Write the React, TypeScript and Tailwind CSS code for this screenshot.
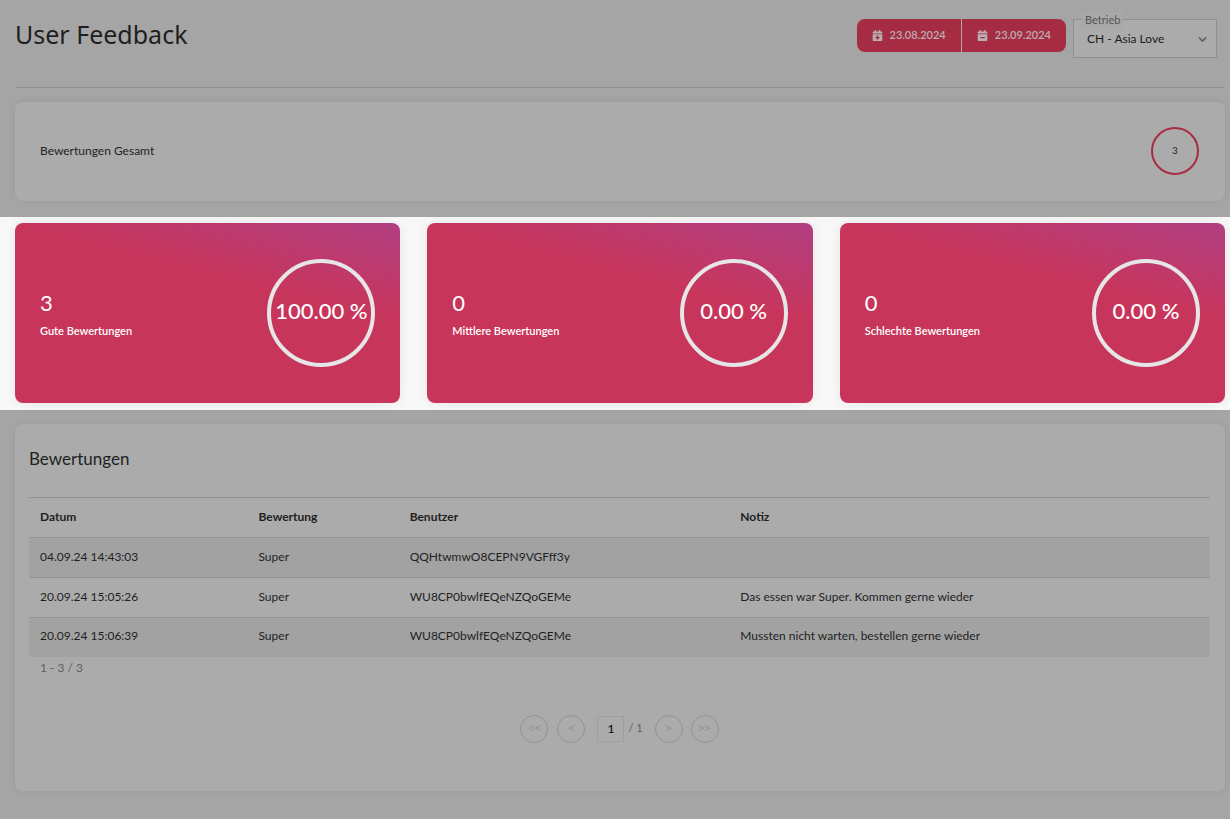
import React, { useState } from 'react';
import { FaCalendarMinus, FaCalendarPlus } from 'react-icons/fa';
import { ChevronDown } from 'lucide-react';

// --- Data ---

const ratingCards = [
  { count: 3, label: 'Gute Bewertungen', percent: '100.00 %' },
  { count: 0, label: 'Mittlere Bewertungen', percent: '0.00 %' },
  { count: 0, label: 'Schlechte Bewertungen', percent: '0.00 %' },
];

const ratings = [
  { date: '04.09.24 14:43:03', rating: 'Super', user: 'QQHtwmwO8CEPN9VGFff3y', note: '' },
  { date: '20.09.24 15:05:26', rating: 'Super', user: 'WU8CP0bwlfEQeNZQoGEMe', note: 'Das essen war Super. Kommen gerne wieder' },
  { date: '20.09.24 15:06:39', rating: 'Super', user: 'WU8CP0bwlfEQeNZQoGEMe', note: 'Mussten nicht warten, bestellen gerne wieder' },
];

// --- Components ---

const Header: React.FC = () => (
  <header className="flex items-start justify-between border-b border-[#8f8f8f] pb-[29px] pt-[19px]">
    <h1 className="font-['Noto_Sans',sans-serif] text-[25px] leading-[30px] text-[#1f1f1f]">User Feedback</h1>
    <div className="flex items-start gap-[7px] pr-2">
      <div className="flex h-[33px] overflow-hidden rounded-lg bg-[#a62c44] text-[11px] font-semibold text-[#b9b0b2]">
        <button type="button" className="flex items-center gap-[7px] border-r border-[#b9a5a9] px-[15px]">
          <FaCalendarPlus size={11} />
          23.08.2024
        </button>
        <button type="button" className="flex items-center gap-[7px] px-[15px]">
          <FaCalendarMinus size={11} />
          23.09.2024
        </button>
      </div>
      <div className="relative h-[39px] w-36 border border-[#8f8f8f] bg-[#ababab]">
        <label htmlFor="betrieb" className="absolute -top-2 left-2 bg-[#a8a8a8] px-[3px] text-[11px] leading-4 text-[#555]">
          Betrieb
        </label>
        <select id="betrieb" className="h-full w-full appearance-none bg-transparent px-[13px] text-xs text-[#1c1c1c]">
          <option>CH - Asia Love</option>
        </select>
        <ChevronDown size={13} strokeWidth={3} className="pointer-events-none absolute right-[7px] top-[13px] text-[#626262]" />
      </div>
    </div>
  </header>
);

const RatingCard: React.FC<{ count: number; label: string; percent: string }> = ({ count, label, percent }) => (
  <div className="flex h-[180px] items-center justify-between rounded-lg bg-[linear-gradient(194deg,#b13f82_0%,#c8355b_36%)] px-[25px] text-white shadow-[0_0_12px_rgba(0,0,0,0.08)]">
    <div className="pt-1">
      <p className="text-[22px] leading-8">{count}</p>
      <p className="text-[11px] font-semibold leading-6">{label}</p>
    </div>
    <div className="flex size-[108px] items-center justify-center whitespace-nowrap rounded-full border-4 border-[#e6e6e6] pb-1 text-[22px] font-medium">
      {percent}
    </div>
  </div>
);

const PageButton: React.FC<{ label: string; children: React.ReactNode }> = ({ label, children }) => (
  <button
    type="button"
    disabled
    aria-label={label}
    className="flex size-7 items-center justify-center rounded-full border border-[#939393] font-['Noto_Sans',sans-serif] text-[11px] text-[#8c8c8c]"
  >
    {children}
  </button>
);

const Pagination: React.FC = () => {
  const [page, setPage] = useState('1');

  return (
    <div className="flex items-center justify-center pt-[38px] text-xs text-[#606060]">
      <div className="flex gap-[9px]">
        <PageButton label="Erste Seite">&lt;&lt;</PageButton>
        <PageButton label="Vorherige Seite">&lt;</PageButton>
      </div>
      <input
        aria-label="Seite"
        value={page}
        onChange={(e) => setPage(e.target.value)}
        className="ml-3 mr-1 h-[26px] w-[27px] border border-[#a0a0a0] text-center text-black"
      />
      <span className="text-[11px]">/ 1</span>
      <div className="ml-3 flex gap-2">
        <PageButton label="Nächste Seite">&gt;</PageButton>
        <PageButton label="Letzte Seite">&gt;&gt;</PageButton>
      </div>
    </div>
  );
};

const RatingsTable: React.FC = () => (
  <section className="rounded-lg bg-[#ababab] pb-12 pl-[14px] pr-[15px] pt-[21px] shadow-[0_0_10px_rgba(0,0,0,0.06)]">
    <h2 className="text-[17px] leading-7">Bewertungen</h2>
    <table className="mt-6 w-full table-fixed text-left text-xs">
      <thead>
        <tr className="h-10 border-t border-[#939393]">
          <th className="w-[18.5%] px-[11px] pb-[2px] font-bold">Datum</th>
          <th className="w-[12.8%] px-[11px] pb-[2px] font-bold">Bewertung</th>
          <th className="w-[28%] px-[11px] pb-[2px] font-bold">Benutzer</th>
          <th className="px-[11px] pb-[2px] font-bold">Notiz</th>
        </tr>
      </thead>
      <tbody>
        {ratings.map((row) => (
          <tr key={row.date} className="h-10 border-t border-[#939393] last:h-[39px] odd:bg-[#a2a2a2]">
            <td className="px-[11px] pb-[2px]">{row.date}</td>
            <td className="px-[11px] pb-[2px]">{row.rating}</td>
            <td className="px-[11px] pb-[2px]">{row.user}</td>
            <td className="px-[11px] pb-[2px]">{row.note}</td>
          </tr>
        ))}
      </tbody>
    </table>
    <p className="px-[11px] pt-[2px] text-xs leading-[18px] text-[#606060]">1 - 3 / 3</p>
    <Pagination />
  </section>
);

const App: React.FC = () => (
  <div className="min-h-screen bg-[#a5a5a5] font-['Lato','Open_Sans',sans-serif] text-xs text-[#1f1f1f]">
    <div className="pb-4 pl-[15px] pr-[5px]">
      <Header />
      <section className="mt-[14px] flex h-[99px] items-center justify-between rounded-lg bg-[#ababab] pb-[2px] pl-[25px] pr-[26px] shadow-[0_0_10px_rgba(0,0,0,0.06)]">
        <p>Bewertungen Gesamt</p>
        <div className="flex size-12 items-center justify-center rounded-full border-2 border-[#a62c44] text-[10px]">3</div>
      </section>
    </div>

    {/* Highlighted row */}
    <div className="grid grid-cols-3 gap-[27px] bg-[#f8f8f8] pb-[7px] pl-[15px] pr-[5px] pt-[6px]">
      {ratingCards.map((card) => (
        <RatingCard key={card.label} {...card} />
      ))}
    </div>

    <div className="pb-7 pl-[15px] pr-[5px] pt-[14px]">
      <RatingsTable />
    </div>
  </div>
);

export default App;
